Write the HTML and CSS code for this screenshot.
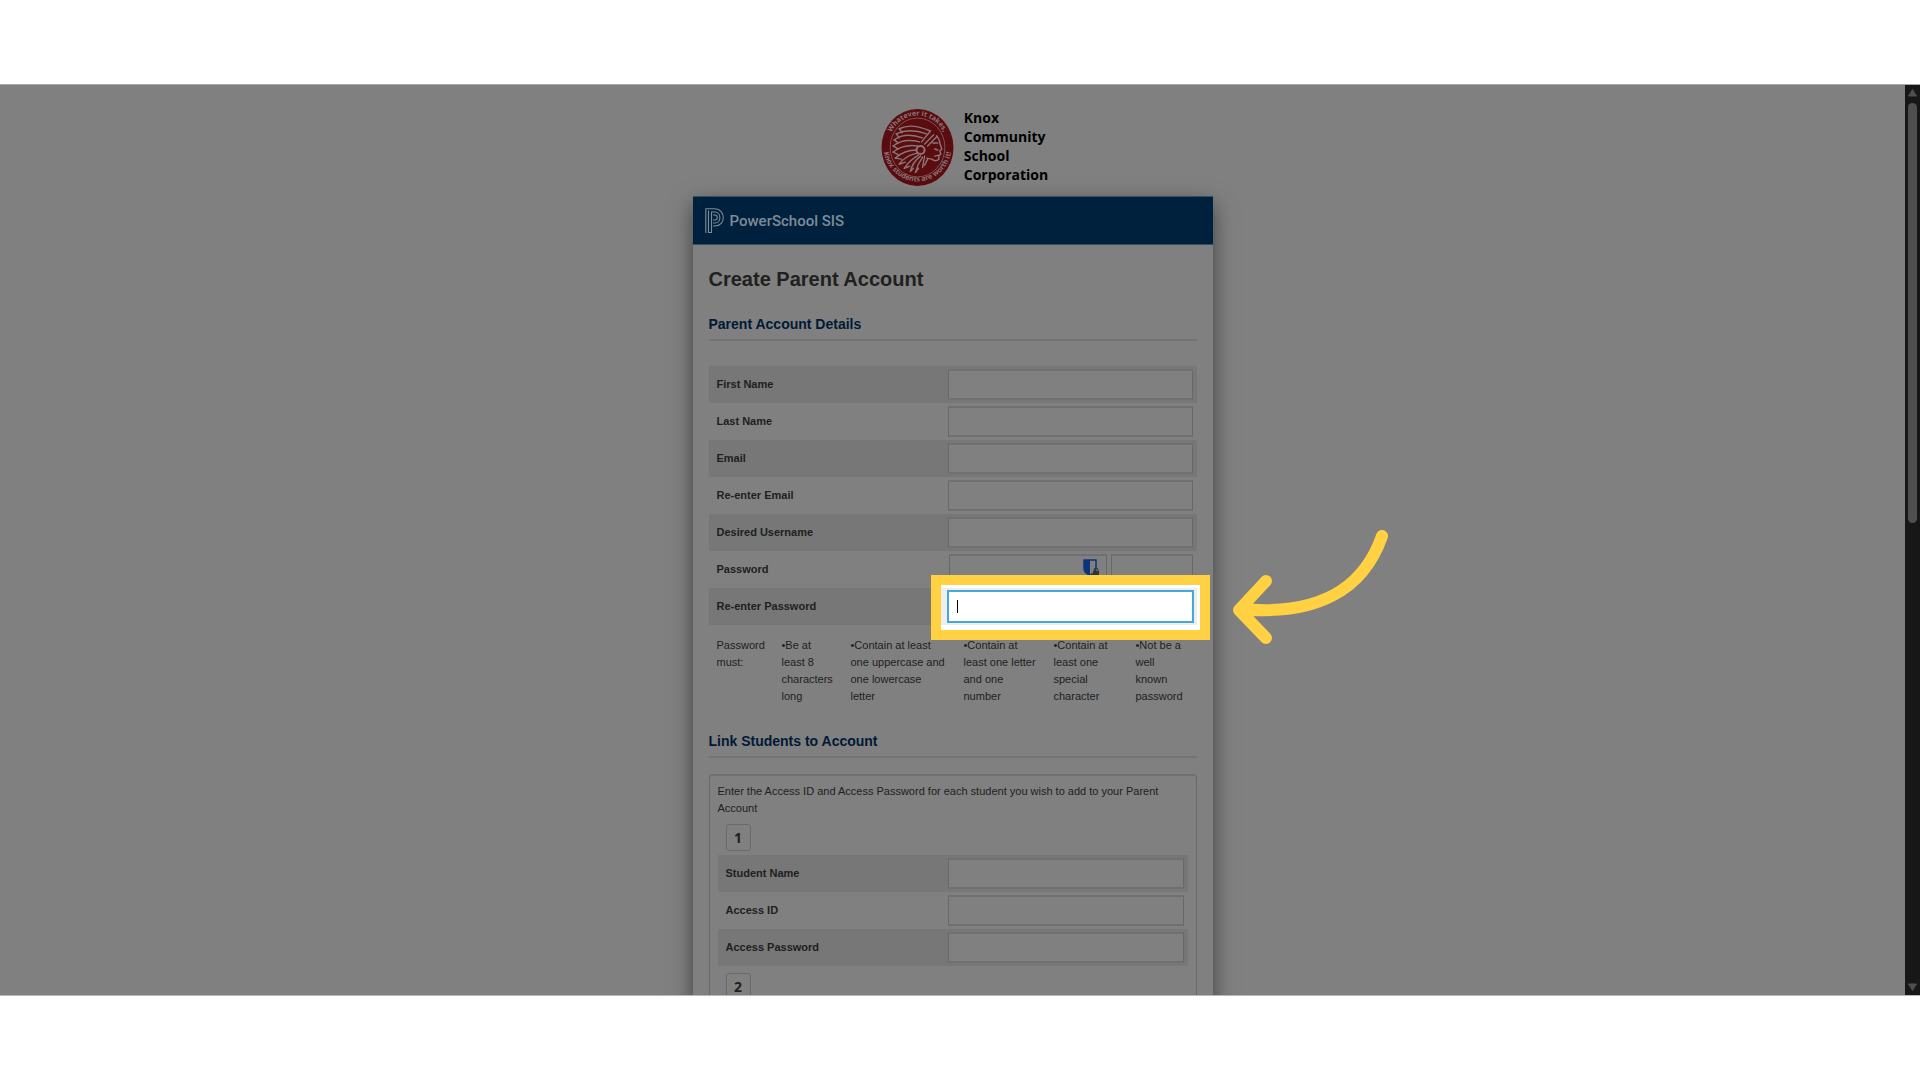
FILE: index.html
```html
<!DOCTYPE html>
<html lang="en">
<head>
    <meta charset="UTF-8">
    <meta name="viewport" content="width=device-width, initial-scale=1.0">
    <title>Create Parent Account | PowerSchool SIS</title>
    <link rel="stylesheet" href="styles.css">
</head>
<body>
    <div class="window">
        <main class="page">
            <!-- School logo -->
            <header class="school">
                <svg class="school-logo" viewBox="0 0 72 77" role="img" aria-label="Knox Community School Corporation">
                    <defs>
                        <path id="arcTop" d="M7 38 A29 31 0 0 1 65 38"/>
                        <path id="arcBottom" d="M2 36 A34 36 0 0 0 70 36"/>
                    </defs>
                    <ellipse cx="36" cy="38.500" rx="35.500" ry="38" fill="#5a0c0f"/>
                    <ellipse cx="36" cy="38.500" rx="27" ry="29" fill="none" stroke="#806468" stroke-width="0.800"/>
                    <text class="logo-text"><textPath href="#arcTop" startOffset="50%" text-anchor="middle">Whatever it takes,</textPath></text>
                    <text class="logo-text"><textPath href="#arcBottom" startOffset="50%" text-anchor="middle">Knox students are worth it!</textPath></text>
                    <g fill="none" stroke="#8a7678" stroke-width="1.400" stroke-linecap="round" stroke-linejoin="round">
                        <path d="M18 20 Q30 14 48 22 M15 25 Q28 19 45 25 M13 31 Q24 23 41 29 M12 37 Q22 29 38 33 M12 43 Q22 35 36 37 M14 49 Q23 41 35 41 M18 55 Q24 46 36 44 M23 59 Q28 51 37 46 M29 62 Q31 53 39 47 M34 63 Q36 55 41 48"/>
                        <path d="M18 20 L21 24 M15 25 L18 29 M13 31 L17 34 M12 37 L17 40 M12 43 L18 46 M14 49 L20 50 M18 55 L24 53 M23 59 L28 57 M29 62 L32 59 M34 63 L37 59"/>
                        <path d="M40 33 L49 22 M43 35 L52 26 M46 37 L55 28"/>
                        <circle cx="39" cy="41" r="4" stroke-width="2"/>
                        <path d="M55 27 Q58 31 58 34 L60 40 L58 42 L59 45 L57 47 L57 50 Q54 53 50 50 L45 49 M51 34 L56 34 M53 40 L56 41 M53 47 L57 46"/>
                        <path d="M43 47 L41 58 M46 50 L43 56"/>
                    </g>
                </svg>
                <p class="school-name">Knox<br>Community<br>School<br>Corporation</p>
            </header>

            <!-- Registration card -->
            <section class="card">
                <div class="brand">
                    <svg class="brand-mark" viewBox="0 0 20 26" aria-hidden="true">
                        <g fill="none" stroke="#7d8b99" stroke-width="1.100">
                            <path d="M0.800 0.800 V25"/>
                            <path d="M0.500 0.800 H10 C21 1 21 18 10 18 H8"/>
                            <path d="M3.500 2.500 V24.500 H6.500 V4 H10 C16.500 4 16.500 15 10 15 H8"/>
                            <path d="M8 7 H10 C13 7 13 12 10 12 H8"/>
                        </g>
                    </svg>
                    <span class="brand-name">PowerSchool SIS</span>
                </div>

                <form class="content">
                    <h1 class="title">Create Parent Account</h1>

                    <h2 class="section-title">Parent Account Details</h2>
                    <div class="rows">
                        <div class="row">
                            <label for="firstName">First Name</label>
                            <input type="text" id="firstName">
                        </div>
                        <div class="row">
                            <label for="lastName">Last Name</label>
                            <input type="text" id="lastName">
                        </div>
                        <div class="row">
                            <label for="email">Email</label>
                            <input type="email" id="email">
                        </div>
                        <div class="row">
                            <label for="email2">Re-enter Email</label>
                            <input type="email" id="email2">
                        </div>
                        <div class="row">
                            <label for="username">Desired Username</label>
                            <input type="text" id="username">
                        </div>
                        <div class="row">
                            <label for="password">Password</label>
                            <div class="password">
                                <input type="password" id="password">
                                <svg class="shield" viewBox="0 0 17 18" aria-hidden="true">
                                    <path d="M1 1 H13 V9 Q13 14 7 16 Q1 14 1 9 Z" fill="#808080" stroke="#0c3478" stroke-width="1.500"/>
                                    <path d="M1 1 H7 V16 Q1 14 1 9 Z" fill="#0c3478"/>
                                    <path d="M11 12 V11 Q11 9 13 9 Q15 9 15 11 V12" fill="none" stroke="#333333"/>
                                    <rect x="10" y="12" width="6" height="5" fill="#333333"/>
                                </svg>
                                <div class="strength"></div>
                            </div>
                        </div>
                        <div class="row">
                            <label for="password2">Re-enter Password</label>
                            <div class="spotlight">
                                <div class="spotlight-row">
                                    <input type="password" id="password2">
                                    <span class="caret"></span>
                                </div>
                                <svg class="arrow" viewBox="0 0 156 116" aria-hidden="true">
                                    <path d="M150 6 C131 61 83 86 9 79 M34 51 L7 80 L34 108" fill="none" stroke="#ffd143" stroke-width="12" stroke-linecap="round" stroke-linejoin="round"/>
                                </svg>
                            </div>
                        </div>
                    </div>

                    <div class="rules">
                        <p>Password must:</p>
                        <p>•Be at least 8 characters long</p>
                        <p>•Contain at least one uppercase and one lowercase letter</p>
                        <p>•Contain at least one letter and one number</p>
                        <p>•Contain at least one special character</p>
                        <p>•Not be a well known password</p>
                    </div>

                    <h2 class="section-title">Link Students to Account</h2>
                    <div class="students">
                        <p class="hint">Enter the Access ID and Access Password for each student you wish to add to your Parent Account</p>
                        <div class="number">1</div>
                        <div class="rows">
                            <div class="row">
                                <label for="student1">Student Name</label>
                                <input type="text" id="student1">
                            </div>
                            <div class="row">
                                <label for="access1">Access ID</label>
                                <input type="text" id="access1">
                            </div>
                            <div class="row">
                                <label for="accessPw1">Access Password</label>
                                <input type="password" id="accessPw1">
                            </div>
                        </div>
                        <div class="number">2</div>
                    </div>
                </form>
            </section>
        </main>

        <!-- Scrollbar -->
        <div class="scrollbar" aria-hidden="true">
            <svg class="scroll-arrow" viewBox="0 0 9 8"><path d="M4.500 0.500 L8.500 7 H0.500 Z" fill="#4f4f4f" stroke="#4f4f4f" stroke-linejoin="round"/></svg>
            <div class="track"><div class="thumb"></div></div>
            <svg class="scroll-arrow" viewBox="0 0 9 8"><path d="M4.500 7.500 L8.500 1 H0.500 Z" fill="#4f4f4f" stroke="#4f4f4f" stroke-linejoin="round"/></svg>
        </div>
    </div>
</body>
</html>
```
FILE: styles.css
```css
* {
    margin: 0;
    padding: 0;
    box-sizing: border-box;
}

body {
    font-family: "Liberation Sans", Arial, sans-serif;
    font-size: 11px;
    line-height: 17px;
    color: #202020;
    background: #ffffff;
    height: 100vh;
    padding: 84px 0;
    overflow: hidden;
}

.window {
    display: flex;
    height: 100%;
    background: #808080;
    border-top: 1px solid #a8a8a8;
    border-bottom: 1px solid #b8b8b8;
}

.page {
    flex: 1;
    display: flex;
    flex-direction: column;
    align-items: center;
    overflow: hidden;
}

/* School logo */
.school {
    display: flex;
    gap: 10px;
    padding: 23px 0 9px 24px;
}

.school-logo {
    width: 73px;
    height: 79px;
}

.logo-text {
    font-family: "Open Sans", sans-serif;
    font-size: 7px;
    font-weight: 700;
    fill: #8a7678;
}

.school-name {
    font-family: "Open Sans", sans-serif;
    font-size: 14px;
    font-weight: 700;
    line-height: 19px;
    color: #000000;
}

/* Card */
.card {
    width: 520px;
    background: #808080;
    box-shadow: 0 8px 20px rgba(0, 0, 0, 0.5);
}

.brand {
    display: flex;
    align-items: center;
    gap: 5px;
    height: 49px;
    padding-left: 12px;
    background: #00213d;
    border-top: 1px solid #33506a;
    border-bottom: 1px solid #33506a;
}

.brand-mark {
    width: 20px;
    height: 26px;
}

.brand-name {
    font-family: Roboto, sans-serif;
    font-size: 15px;
    font-weight: 500;
    line-height: 20px;
    color: #7d8b99;
}

.content {
    padding: 19px 16px;
}

.title {
    font-size: 20px;
    line-height: 30px;
    margin-bottom: 20px;
}

.section-title {
    font-size: 14px;
    line-height: 20px;
    color: #001a35;
    padding-bottom: 5px;
    border-bottom: 2px solid #737373;
}

.section-title + .rows {
    margin-top: 25px;
}

.row {
    display: flex;
    align-items: center;
    justify-content: space-between;
    position: relative;
    height: 37px;
    padding: 0 4px 0 8px;
}

.row:nth-child(odd) {
    background: #777777;
}

.row label {
    font-weight: 700;
}

.row input,
.strength {
    width: 245px;
    height: 31px;
    background: #808080;
    border: 1px solid #686868;
    border-top: 2px solid #707070;
    border-bottom: 2px solid #707070;
    outline: none;
}

.password {
    display: flex;
    gap: 4px;
    position: relative;
    width: 244px;
}

.password input {
    flex: 1;
    min-width: 0;
}

.password .strength {
    width: 82px;
}

.shield {
    position: absolute;
    top: 5px;
    left: 134px;
    width: 17px;
    height: 18px;
}

/* Highlighted field */
.spotlight {
    position: absolute;
    top: -13px;
    right: -13px;
    width: 279px;
    height: 65px;
    padding: 3px 3px 5px 0;
    background: #ffffff;
    border: 10px solid #ffd143;
    z-index: 2;
}

.spotlight-row {
    display: flex;
    align-items: center;
    justify-content: flex-end;
    position: relative;
    height: 37px;
    padding-right: 3px;
    background: #eeeeee;
}

.spotlight input {
    width: 247px;
    height: 33px;
    background: #ffffff;
    border: 2px solid #43a8dc;
}

.caret {
    position: absolute;
    left: 16px;
    top: 12px;
    width: 1px;
    height: 13px;
    background: #000000;
}

.arrow {
    position: absolute;
    left: 291px;
    top: -55px;
    width: 156px;
    height: 116px;
}

/* Password rules */
.rules {
    display: grid;
    grid-template-columns: 65px 69px 113px 90px 82px 66px;
    padding: 12px 0 26px 8px;
    margin-right: -13px;
}

.rules p {
    padding-right: 16px;
}

/* Students */
.students {
    margin-top: 16px;
    padding: 7px 8px;
    border: 1px solid #686868;
    border-top: 2px solid #707070;
    border-radius: 4px;
}

.students .row input {
    width: 236px;
}

.number {
    width: 25px;
    height: 27px;
    margin: 7px 0 4px 8px;
    border: 1px solid #6a6a6a;
    border-radius: 3px;
    font-family: "Open Sans", sans-serif;
    font-size: 14px;
    font-weight: 700;
    line-height: 25px;
    text-align: center;
}

/* Scrollbar */
.scrollbar {
    display: flex;
    flex-direction: column;
    align-items: center;
    gap: 6px;
    width: 15px;
    padding: 4px 0;
    background: #171717;
}

.scroll-arrow {
    width: 9px;
    height: 8px;
}

.track {
    flex: 1;
}

.thumb {
    width: 9px;
    height: 48%;
    background: #4f4f4f;
    border-radius: 5px;
}
```
